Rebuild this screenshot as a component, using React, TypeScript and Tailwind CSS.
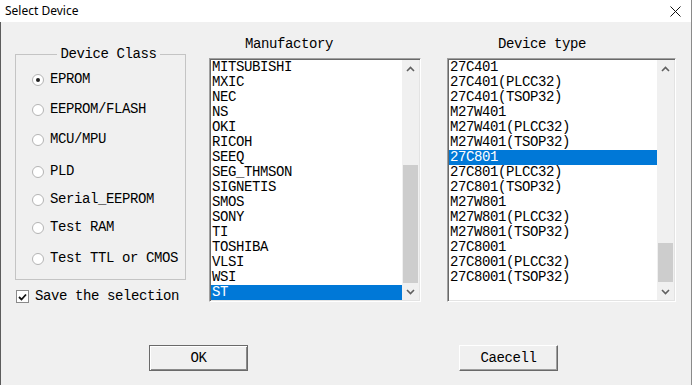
import React from 'react'

const mono = { fontFamily: '"Liberation Mono", "DejaVu Sans Mono", monospace' }

const classes = [
  { name: 'EPROM', mt: 'mt-0' },
  { name: 'EEPROM/FLASH', mt: 'mt-[15px]' },
  { name: 'MCU/MPU', mt: 'mt-[15px]' },
  { name: 'PLD', mt: 'mt-[17px]' },
  { name: 'Serial_EEPROM', mt: 'mt-[13px]' },
  { name: 'Test RAM', mt: 'mt-[13px]' },
  { name: 'Test TTL or CMOS', mt: 'mt-[16px]' },
]

const makers = [
  'MITSUBISHI', 'MXIC', 'NEC', 'NS', 'OKI', 'RICOH', 'SEEQ', 'SEG_THMSON',
  'SIGNETIS', 'SMOS', 'SONY', 'TI', 'TOSHIBA', 'VLSI', 'WSI', 'ST',
]

const devices = [
  '27C401', '27C401(PLCC32)', '27C401(TSOP32)', 'M27W401', 'M27W401(PLCC32)',
  'M27W401(TSOP32)', '27C801', '27C801(PLCC32)', '27C801(TSOP32)', 'M27W801',
  'M27W801(PLCC32)', 'M27W801(TSOP32)', '27C8001', '27C8001(PLCC32)', '27C8001(TSOP32)',
]

function Chevron({ up }: { up?: boolean }) {
  return (
    <div className="h-[17px] flex items-center justify-center">
      <svg width="9" height="6" viewBox="0 0 9 6">
        <path d={up ? 'M1 5 L4.5 1.5 L8 5' : 'M1 1 L4.5 4.5 L8 1'} fill="none" stroke="#606060" strokeWidth="1.6" />
      </svg>
    </div>
  )
}

function ListBox({ items, selected, width, rowWidth, thumbTop, thumbHeight }: {
  items: string[]; selected: string; width: string; rowWidth: string; thumbTop: number; thumbHeight: number
}) {
  return (
    <div className={`${width} h-[244px] bg-white border border-[#a0a0a0] border-r-white border-b-white shadow-[inset_1px_1px_0_#696969,inset_-1px_-1px_0_#e3e3e3] p-px flex`}>
      <div className={`${rowWidth} flex flex-col`}>
        {items.map(it => (
          <div key={it} className={`h-[15px] leading-[15px] pl-px whitespace-pre ${it === selected ? 'bg-[#0078d7] text-white' : 'text-black'}`}>
            {it}
          </div>
        ))}
      </div>
      <div className="w-[17px] h-full bg-[#f0f0f0] flex flex-col">
        <Chevron up />
        <div className="flex-1 flex flex-col">
          <div className="mx-px bg-[#cdcdcd]" style={{ marginTop: thumbTop, height: thumbHeight }} />
        </div>
        <Chevron />
      </div>
    </div>
  )
}

export default function App() {
  return (
    <div className="w-[692px] h-[385px] bg-[#f0f0f0] flex flex-col border-r border-[#8a8a8a] overflow-hidden">
      <div className="h-[22px] bg-white flex items-center justify-between pl-[5px] pr-[10px]" style={{ fontFamily: '"Noto Sans", "Liberation Sans", sans-serif' }}>
        <span className="text-[12px] text-black">Select Device</span>
        <svg width="11" height="11" viewBox="0 0 11 11">
          <path d="M0.5 0.5 L10.5 10.5 M10.5 0.5 L0.5 10.5" stroke="#111" strokeWidth="1" />
        </svg>
      </div>

      <div className="flex-1 border-l border-[#5c5c5c] pt-[15px] text-[14px] tracking-[-0.4px] text-black" style={mono}>
        <div className="flex items-start pl-[14px]">
          {/* device class */}
          <div className="w-[171px] flex flex-col">
            <fieldset className="mt-[10px] border border-[#c4c4c4] pt-[10px] pb-[13px] pl-[16px]">
              <legend className="mx-auto px-[3px] leading-[15px]">Device Class</legend>
              {classes.map((c, i) => (
                <div key={c.name} className={`${c.mt} h-[15px] leading-[15px] flex items-center gap-[6px]`}>
                  <span className="w-[12px] h-[12px] rounded-full bg-white border border-[#b4b4b4] flex items-center justify-center">
                    {i === 0 && <span className="w-[4px] h-[4px] rounded-full bg-[#222]" />}
                  </span>
                  <span>{c.name}</span>
                </div>
              ))}
            </fieldset>
            <div className="mt-[9px] ml-px h-[15px] leading-[15px] flex items-center gap-[6px]">
              <span className="w-[13px] h-[13px] bg-white border border-[#8a8a8a] flex items-center justify-center">
                <svg width="9" height="8" viewBox="0 0 9 8">
                  <path d="M1 4 L3.5 6.5 L8 1.5" fill="none" stroke="#111" strokeWidth="1.8" />
                </svg>
              </span>
              <span>Save the selection</span>
            </div>
          </div>

          {/* manufactory */}
          <div className="ml-[23px] flex flex-col">
            <div className="ml-[36px] h-[15px] leading-[15px]">Manufactory</div>
            <div className="mt-[6px]">
              <ListBox items={makers} selected="ST" width="w-[212px]" rowWidth="w-[191px]" thumbTop={88} thumbHeight={118} />
            </div>
          </div>

          {/* device type */}
          <div className="ml-[26px] flex flex-col">
            <div className="ml-[51px] h-[15px] leading-[15px]">Device type</div>
            <div className="mt-[6px]">
              <ListBox items={devices} selected="27C801" width="w-[229px]" rowWidth="w-[208px]" thumbTop={166} thumbHeight={39} />
            </div>
          </div>
        </div>

        <div className="mt-[41px] pl-[148px] flex gap-[211px]">
          <button className="w-[99px] h-[26px] bg-[#f0f0f0] border border-[#6a6a6a] shadow-[inset_1px_1px_0_#ffffff,inset_-1px_-1px_0_#8a8a8a] leading-[15px]">
            OK
          </button>
          <button className="w-[99px] h-[26px] bg-[#f0f0f0] border border-t-white border-l-white border-r-[#696969] border-b-[#696969] shadow-[inset_-1px_-1px_0_#a0a0a0] leading-[15px]">
            Caecell
          </button>
        </div>
      </div>
    </div>
  )
}
